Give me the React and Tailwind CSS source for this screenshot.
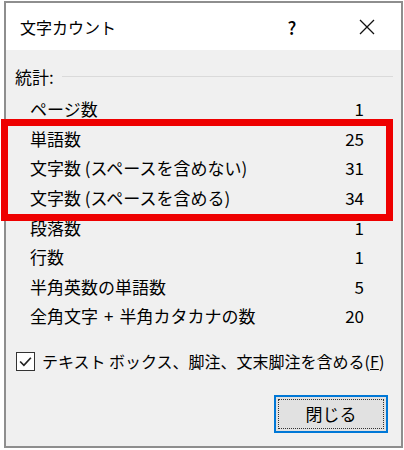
import React from "react";

const rows = [
  ["ページ数", "1"],
  ["単語数", "25"],
  ["文字数 (スペースを含めない)", "31"],
  ["文字数 (スペースを含める)", "34"],
  ["段落数", "1"],
  ["行数", "1"],
  ["半角英数の単語数", "5"],
  [
    <>
      全角文字<span className="mx-[6px]">+</span>半角カタカナの数
    </>,
    "20",
  ],
];

export default function App() {
  return (
    <div
      className="relative w-[404px] h-[450px] bg-white overflow-hidden"
      style={{ fontFamily: '"Noto Sans CJK JP", "Noto Sans", sans-serif' }}
    >
      <div className="ml-[4px] mt-[1px] w-[399px] h-[447px] border-2 border-[#8e8e8e] flex flex-col text-black">
        {/* title bar */}
        <div className="h-[47px] bg-white flex items-center shrink-0">
          <div className="pl-[14px] text-[16px] leading-none flex-1">文字カウント</div>
          <div className="w-[20px] text-[18px] font-medium leading-none mr-[57px] text-center">?</div>
          <svg className="mr-[26px]" width="16" height="16" viewBox="0 0 16 16">
            <path d="M1 1 L15 15 M15 1 L1 15" stroke="#111" strokeWidth="1.3" fill="none" />
          </svg>
        </div>
        {/* content */}
        <div className="flex-1 bg-[#f0f0f0] flex flex-col">
          <div className="h-[22px] mt-[15px] flex items-center pl-[9px]">
            <span className="text-[17px] leading-none">統計:</span>
            <div className="flex-1 h-px bg-[#dadada] ml-[8px] mr-[8px]" />
          </div>
          <div className="mt-[7px] flex flex-col">
            {rows.map(([label, n], i) => (
              <div key={i} className="h-[29.6px] flex items-center pl-[24px] pr-[37px] text-[17px] leading-none">
                <span className="flex-1">{label}</span>
                <span>{n}</span>
              </div>
            ))}
          </div>
          <div className="mt-[21px] flex items-center pl-[10px]">
            <div className="w-[19px] h-[19px] border border-[#333] bg-white flex items-center justify-center">
              <svg width="15" height="15" viewBox="0 0 14 14">
                <path d="M2 7 L5.5 10.5 L12 3.5" stroke="#222" strokeWidth="1.6" fill="none" />
              </svg>
            </div>
            <span className="ml-[7px] text-[16px] leading-none">
              テキスト ボックス、脚注、文末脚注を含める(<span className="underline">F</span>)
            </span>
          </div>
          <div className="flex justify-end mt-[24px] pr-[13px]">
            <div className="w-[114px] h-[38px] border-2 border-[#0078d7] bg-[#e1e1e1] p-[2px]">
              <div className="w-full h-full border border-dotted border-[#333] flex items-center justify-center text-[17px] leading-none">
                閉じる
              </div>
            </div>
          </div>
        </div>
      </div>
      {/* red annotation box */}
      <div className="absolute left-[1px] top-[119px] w-[392px] h-[102px] border-[7px] border-[#ee0000]" />
    </div>
  );
}
